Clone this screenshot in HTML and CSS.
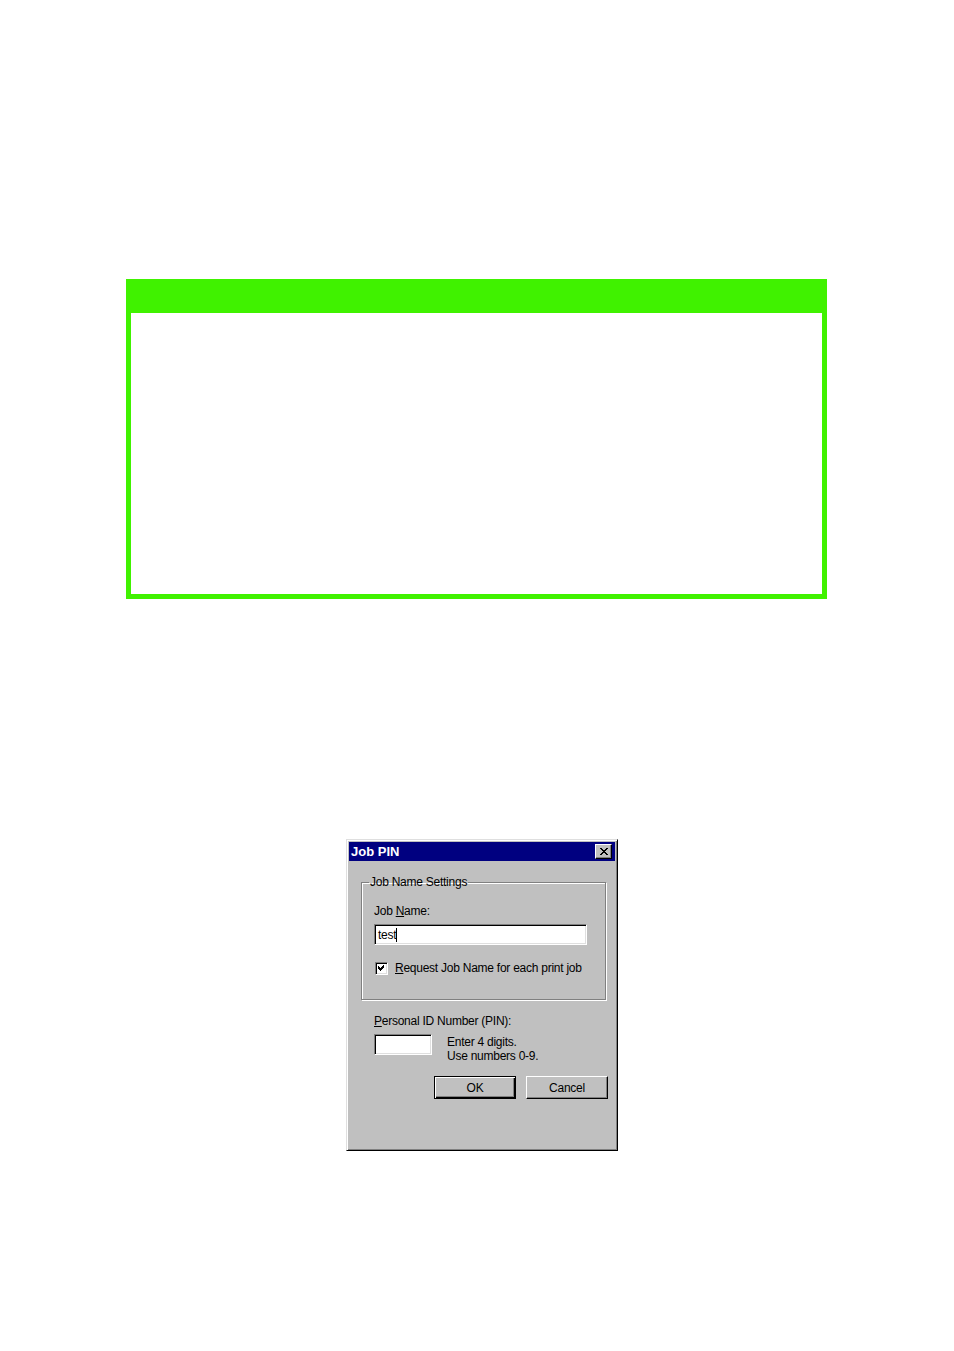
FILE: index.html
```html
<!DOCTYPE html>
<html lang="en">
<head>
    <meta charset="UTF-8">
    <title>Job PIN</title>
    <link rel="stylesheet" href="styles.css">
</head>
<body>
    <div class="page">
        <div class="notice">
            <div class="notice-head"></div>
            <div class="notice-body"></div>
        </div>

        <div class="dialog">
            <div class="titlebar">
                <span class="title">Job PIN</span>
                <span class="close-btn">
                    <svg width="8" height="7" viewBox="0 0 8 7">
                        <path d="M0 0h2v1h1v1h2v-1h1v-1h2v1h-1v1h-1v1h-1v1h1v1h1v1h1v1h-2v-1h-1v-1h-2v1h-1v1h-2v-1h1v-1h1v-1h1v-1h-1v-1h-1v-1h-1z" fill="#000"/>
                    </svg>
                </span>
            </div>
            <div class="dialog-body">
                <fieldset class="group">
                    <legend>Job Name Settings</legend>
                    <div class="label">Job <u>N</u>ame:</div>
                    <div class="field name-field"><span class="caret">test</span></div>
                    <div class="check-row">
                        <span class="checkbox">
                            <svg width="7" height="7" viewBox="0 0 7 7">
                                <path d="M6 0v3h-1v1h-1v1h-1v1h-1v-1h-1v-1h-1v-3h1v1h1v1h1v-1h1v-1h1v-1z" fill="#000"/>
                            </svg>
                        </span>
                        <span><u>R</u>equest Job Name for each print job</span>
                    </div>
                </fieldset>

                <div class="pin">
                    <div class="label"><u>P</u>ersonal ID Number (PIN):</div>
                    <div class="pin-row">
                        <div class="field pin-field"></div>
                        <div class="hint">
                            <div>Enter 4 digits.</div>
                            <div>Use numbers 0-9.</div>
                        </div>
                    </div>
                </div>

                <div class="buttons">
                    <span class="btn btn-default">OK</span>
                    <span class="btn">Cancel</span>
                </div>
            </div>
        </div>
    </div>
</body>
</html>
```

FILE: styles.css
```css
* {
    box-sizing: border-box;
}

body {
    margin: 0;
    background: #fff;
}

.page {
    padding-top: 279px;
    width: 954px;
    height: 1351px;
}

/* green note box */
.notice {
    margin-left: 126px;
    width: 701px;
    height: 320px;
    border: 5px solid #40f200;
    display: flex;
    flex-direction: column;
}

.notice-head {
    height: 29px;
    background: #40f200;
}

.notice-body {
    flex: 1;
}

/* win95 dialog */
.dialog {
    margin-top: 240px;
    margin-left: 346px;
    width: 272px;
    height: 312px;
    padding: 2px;
    background: #c0c0c0;
    border: 1px solid;
    border-color: #dfdfdf #000 #000 #dfdfdf;
    box-shadow: inset 1px 1px #fff, inset -1px -1px #808080;
    font-family: "Liberation Sans", Arial, sans-serif;
    font-size: 12px;
    letter-spacing: -0.25px;
    line-height: 14px;
    color: #000;
}

.titlebar {
    height: 19px;
    background: #000080;
    display: flex;
    align-items: center;
    justify-content: space-between;
    padding: 0 3px 0 2px;
}

.title {
    color: #fff;
    font-weight: bold;
    font-size: 13px;
    letter-spacing: 0;
}

.close-btn {
    width: 17px;
    height: 15px;
    background: #c0c0c0;
    border: 1px solid;
    border-color: #fff #000 #000 #fff;
    box-shadow: inset -1px -1px #808080;
    display: flex;
    align-items: center;
    justify-content: center;
}

.dialog-body {
    padding: 14px 7px 0 12px;
}

.group {
    margin: 0 2px 0 0;
    padding: 14px 12px 24px 12px;
    border: 1px solid #808080;
    box-shadow: inset 1px 1px #fff, 1px 1px #fff;
}

.group legend {
    padding: 0 1px;
    margin-left: -5px;
}

.label {
    padding-top: 1px;
}

.field {
    height: 21px;
    background: #fff;
    border: 1px solid;
    border-color: #808080 #fff #fff #808080;
    box-shadow: inset 1px 1px #000, inset -1px -1px #dfdfdf;
}

.name-field {
    margin-top: 6px;
    width: 213px;
    padding: 3px 0 0 3px;
}

.caret {
    border-right: 1px solid #000;
}

.check-row {
    margin-top: 16px;
    display: flex;
    align-items: center;
    gap: 7px;
}

.checkbox {
    width: 13px;
    height: 13px;
    margin-left: 1px;
    background: #fff;
    border: 1px solid;
    border-color: #808080 #fff #fff #808080;
    box-shadow: inset 1px 1px #000, inset -1px -1px #dfdfdf;
    display: flex;
    align-items: center;
    justify-content: center;
}

.pin {
    margin-top: 13px;
    padding-left: 13px;
}

.pin-row {
    margin-top: 6px;
    display: flex;
}

.pin-field {
    width: 58px;
}

.hint {
    margin-left: 15px;
    padding-top: 1px;
}

.buttons {
    margin-top: 13px;
    display: flex;
    justify-content: flex-end;
    gap: 10px;
}

.btn {
    width: 82px;
    height: 23px;
    background: #c0c0c0;
    border: 1px solid;
    border-color: #fff #000 #000 #fff;
    box-shadow: inset -1px -1px #808080;
    display: flex;
    align-items: center;
    justify-content: center;
}

.btn-default {
    border-color: #000;
    box-shadow: inset 1px 1px #fff, inset -1px -1px #000, inset -2px -2px #808080;
}
```
